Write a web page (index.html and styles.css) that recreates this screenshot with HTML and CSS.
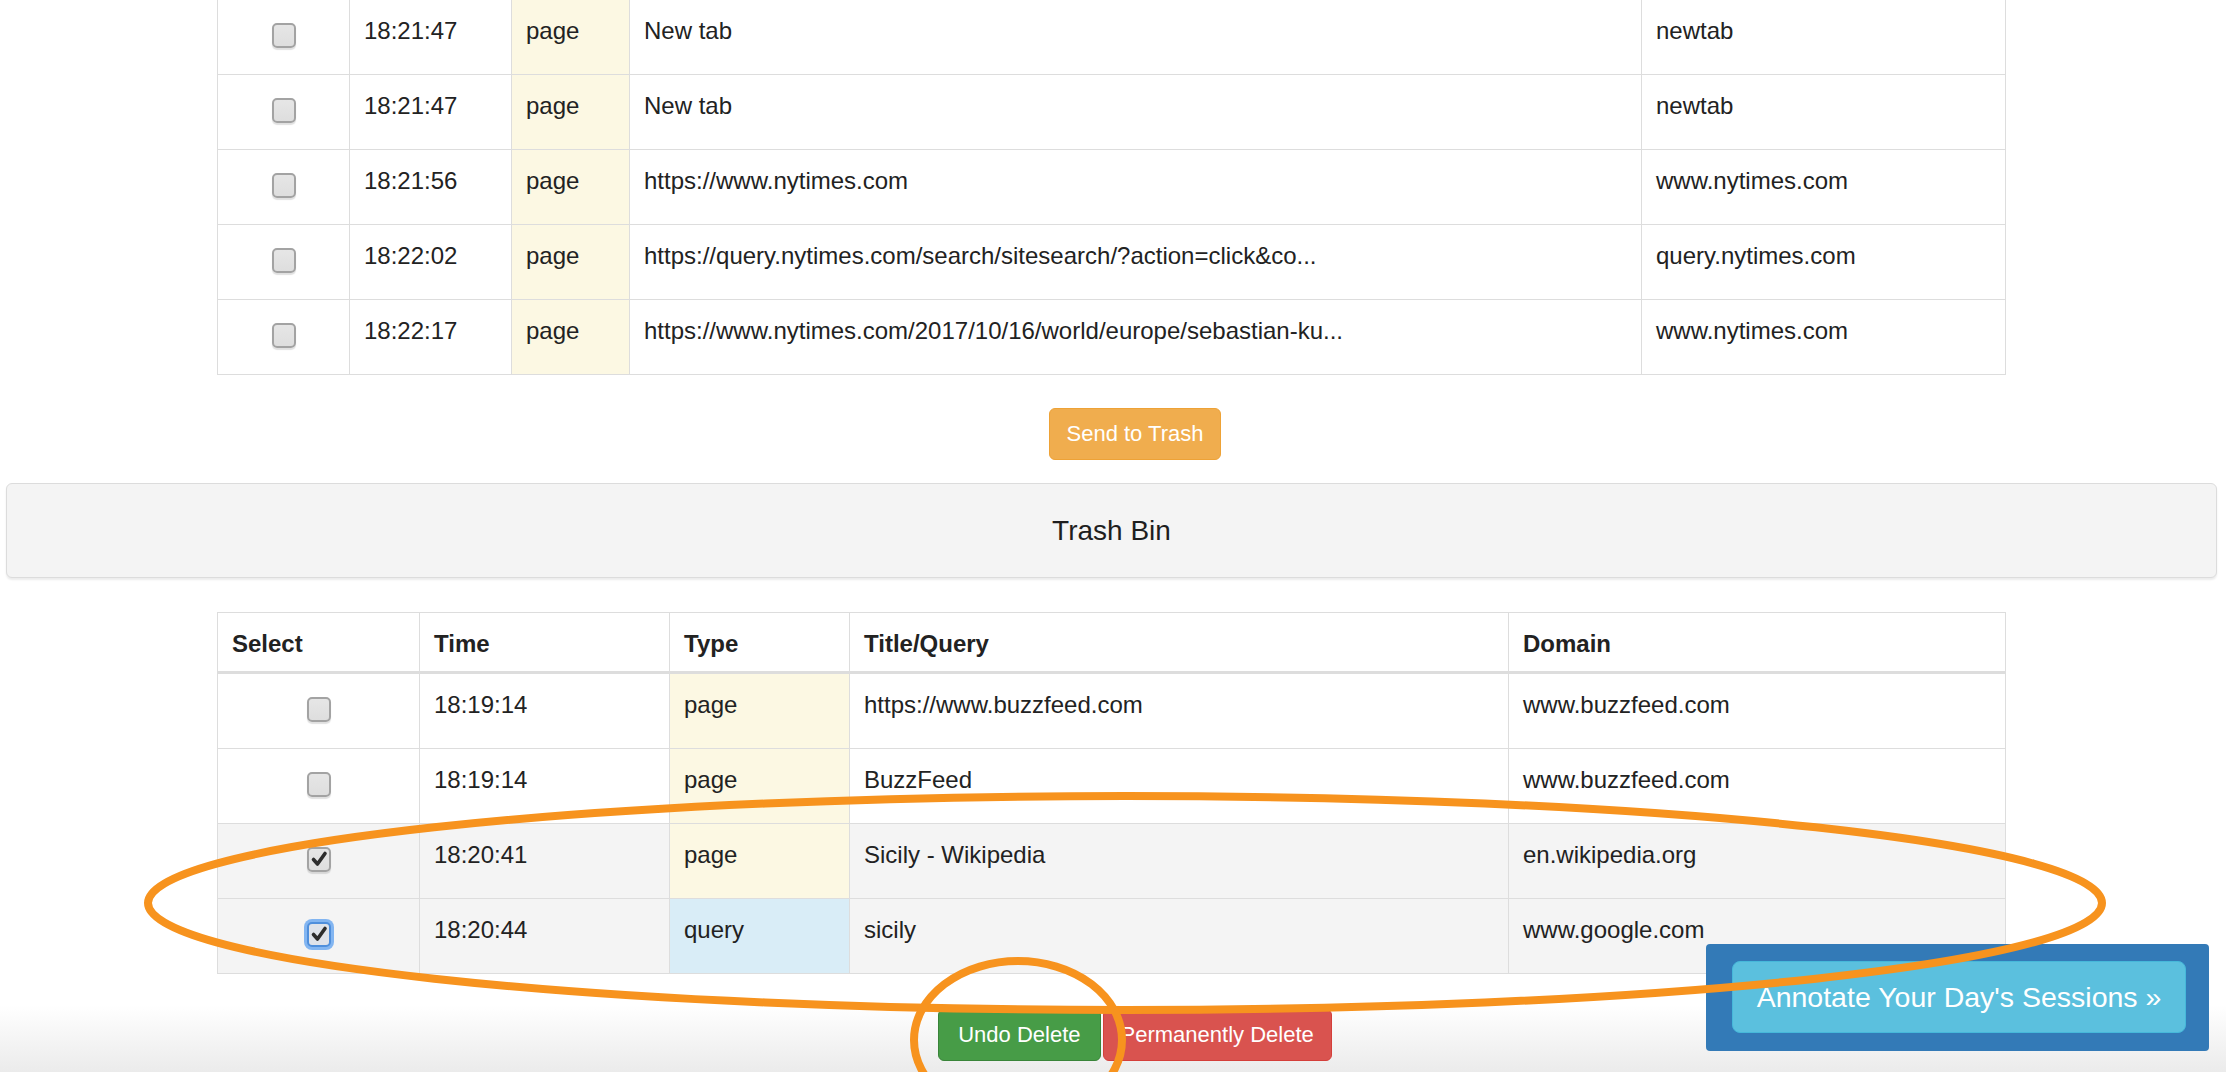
FILE: index.html
```html
<!DOCTYPE html>
<html>
<head>
<meta charset="utf-8">
<title>Trash Bin</title>
<link rel="stylesheet" href="styles.css">
</head>
<body>
<table class="grid top-grid">
  <colgroup><col class="c1a"><col class="c2a"><col class="c3a"><col class="c4a"><col class="c5a"></colgroup>
  <tbody>
    <tr><td class="sel"><span class="cb"></span></td><td>18:21:47</td><td class="t-page">page</td><td>New tab</td><td>newtab</td></tr>
    <tr><td class="sel"><span class="cb"></span></td><td>18:21:47</td><td class="t-page">page</td><td>New tab</td><td>newtab</td></tr>
    <tr><td class="sel"><span class="cb"></span></td><td>18:21:56</td><td class="t-page">page</td><td>https://www.nytimes.com</td><td>www.nytimes.com</td></tr>
    <tr><td class="sel"><span class="cb"></span></td><td>18:22:02</td><td class="t-page">page</td><td>https://query.nytimes.com/search/sitesearch/?action=click&amp;co...</td><td>query.nytimes.com</td></tr>
    <tr><td class="sel"><span class="cb"></span></td><td>18:22:17</td><td class="t-page">page</td><td>https://www.nytimes.com/2017/10/16/world/europe/sebastian-ku...</td><td>www.nytimes.com</td></tr>
  </tbody>
</table>

<div class="actions first-actions">
  <button class="btn btn-warning">Send to Trash</button>
</div>

<div class="panel">
  <h3 class="panel-title">Trash Bin</h3>
</div>

<table class="grid bin-grid">
  <colgroup><col class="c1b"><col class="c2b"><col class="c3b"><col class="c4b"><col class="c5b"></colgroup>
  <thead>
    <tr><th>Select</th><th>Time</th><th>Type</th><th>Title/Query</th><th>Domain</th></tr>
  </thead>
  <tbody>
    <tr><td class="sel"><span class="cb"></span></td><td>18:19:14</td><td class="t-page">page</td><td>https://www.buzzfeed.com</td><td>www.buzzfeed.com</td></tr>
    <tr><td class="sel"><span class="cb"></span></td><td>18:19:14</td><td class="t-page">page</td><td>BuzzFeed</td><td>www.buzzfeed.com</td></tr>
    <tr class="active"><td class="sel"><span class="cb checked"><svg viewBox="0 0 20 20" class="tick"><path d="M4.5 10.5 L8.5 15 L16 4.5"/></svg></span></td><td>18:20:41</td><td class="t-page">page</td><td>Sicily - Wikipedia</td><td>en.wikipedia.org</td></tr>
    <tr class="active"><td class="sel"><span class="cb checked focus"><svg viewBox="0 0 20 20" class="tick"><path d="M4.5 10.5 L8.5 15 L16 4.5"/></svg></span></td><td>18:20:44</td><td class="t-query">query</td><td>sicily</td><td>www.google.com</td></tr>
  </tbody>
</table>

<div class="actions second-actions">
  <button class="btn btn-success">Undo Delete</button>
  <button class="btn btn-danger">Permanently Delete</button>
</div>

<div class="annotate-bar">
  <a class="annotate-btn">Annotate Your Day's Sessions »</a>
</div>

<svg class="marks" viewBox="0 0 2226 1072" width="2226" height="1072">
  <ellipse cx="1125" cy="903" rx="977" ry="107" />
  <ellipse cx="1018" cy="1040" rx="104" ry="79" />
</svg>
</body>
</html>
```

FILE: styles.css
```css
html {
  height: 1072px;
  overflow: hidden;
}

body {
  margin: 0;
  width: 2226px;
  height: 1072px;
  overflow: hidden;
  position: relative;
  font-family: "Liberation Sans", Arial, sans-serif;
  color: #222;
  background: linear-gradient(to bottom, #ffffff 0, #ffffff 1005px, #ebebeb 1072px);
}

.grid {
  border-collapse: collapse;
  table-layout: fixed;
  width: 1788px;
  margin-left: 217px;
  font-size: 24px;
  background: #fff;
}

.grid td,
.grid th {
  border: 1px solid #dddddd;
  padding: 14px;
  line-height: 34px;
  vertical-align: top;
  text-align: left;
  white-space: nowrap;
  overflow: hidden;
}

.grid th {
  font-weight: bold;
  padding-bottom: 10px;
  border-bottom: 3px solid #dddddd;
  color: #222;
}

.grid .sel {
  text-align: center;
}

.top-grid {
  margin-top: -1px;
}

.c1a { width: 132px; }
.c2a { width: 162px; }
.c3a { width: 118px; }
.c4a { width: 1012px; }
.c5a { width: 364px; }

.c1b { width: 202px; }
.c2b { width: 250px; }
.c3b { width: 180px; }
.c4b { width: 659px; }
.c5b { width: 497px; }

.grid tr.active td {
  background: #f4f4f4;
}

.grid td.t-page,
.grid tr.active td.t-page {
  background: #fcf8e3;
}

.grid td.t-query,
.grid tr.active td.t-query {
  background: #d9edf7;
}

.cb {
  display: block;
  box-sizing: border-box;
  width: 24px;
  height: 25px;
  margin: 9px auto 12px;
  border: 2px solid #a3a3a3;
  border-radius: 5px;
  background: linear-gradient(to bottom, #e6e6e6, #dedede);
  box-shadow: 0 2px 1px rgba(0, 0, 0, 0.12);
  position: relative;
}

.cb.focus {
  border-color: #4f8fdc;
  box-shadow: 0 0 0 3px rgba(92, 160, 240, 0.75);
  background: #dfe3ea;
}

.tick {
  position: absolute;
  left: 0;
  top: 0;
  width: 20px;
  height: 20px;
}

.tick path {
  fill: none;
  stroke: #2d2d2d;
  stroke-width: 3.6;
  stroke-linecap: round;
  stroke-linejoin: round;
}

.actions {
  display: flex;
  justify-content: center;
  gap: 2px;
  padding-left: 44px;
}

.first-actions {
  margin-top: 33px;
}

.second-actions {
  margin-top: 35px;
}

.btn {
  font-family: "Liberation Sans", Arial, sans-serif;
  font-size: 22px;
  line-height: 34px;
  padding: 8px 17px;
  border: 1px solid transparent;
  border-radius: 6px;
  color: #fff;
  cursor: pointer;
}

.btn-warning {
  background: #f0ad4e;
  border-color: #eea236;
}

.btn-success {
  background: #479c47;
  border-color: #398439;
  padding: 8px 19px;
}

.btn-danger {
  background: #d9534f;
  border-color: #d43f3a;
}

.panel {
  margin: 23px 9px 0 6px;
  height: 95px;
  box-sizing: border-box;
  border: 1px solid #dcdcdc;
  border-radius: 6px;
  background: #f4f4f4;
  box-shadow: 0 2px 2px rgba(0, 0, 0, 0.08);
  display: flex;
  align-items: center;
  justify-content: center;
  margin-bottom: 34px;
}

.panel-title {
  margin: 0;
  font-size: 28px;
  font-weight: normal;
  color: #1e1e1e;
}

.annotate-bar {
  position: absolute;
  right: 17px;
  bottom: 21px;
  width: 503px;
  height: 107px;
  box-sizing: border-box;
  padding: 17px 23px 18px 26px;
  background: #337ab7;
  border-radius: 4px;
  display: flex;
}

.annotate-btn {
  flex: 1;
  display: flex;
  align-items: center;
  justify-content: center;
  background: #5bc0de;
  border: 1px solid #46b8da;
  border-radius: 8px;
  color: #fff;
  font-size: 28.5px;
}

.marks {
  position: absolute;
  left: 0;
  top: 0;
  pointer-events: none;
}

.marks ellipse {
  fill: none;
  stroke: #f7931e;
  stroke-width: 8;
}
```
